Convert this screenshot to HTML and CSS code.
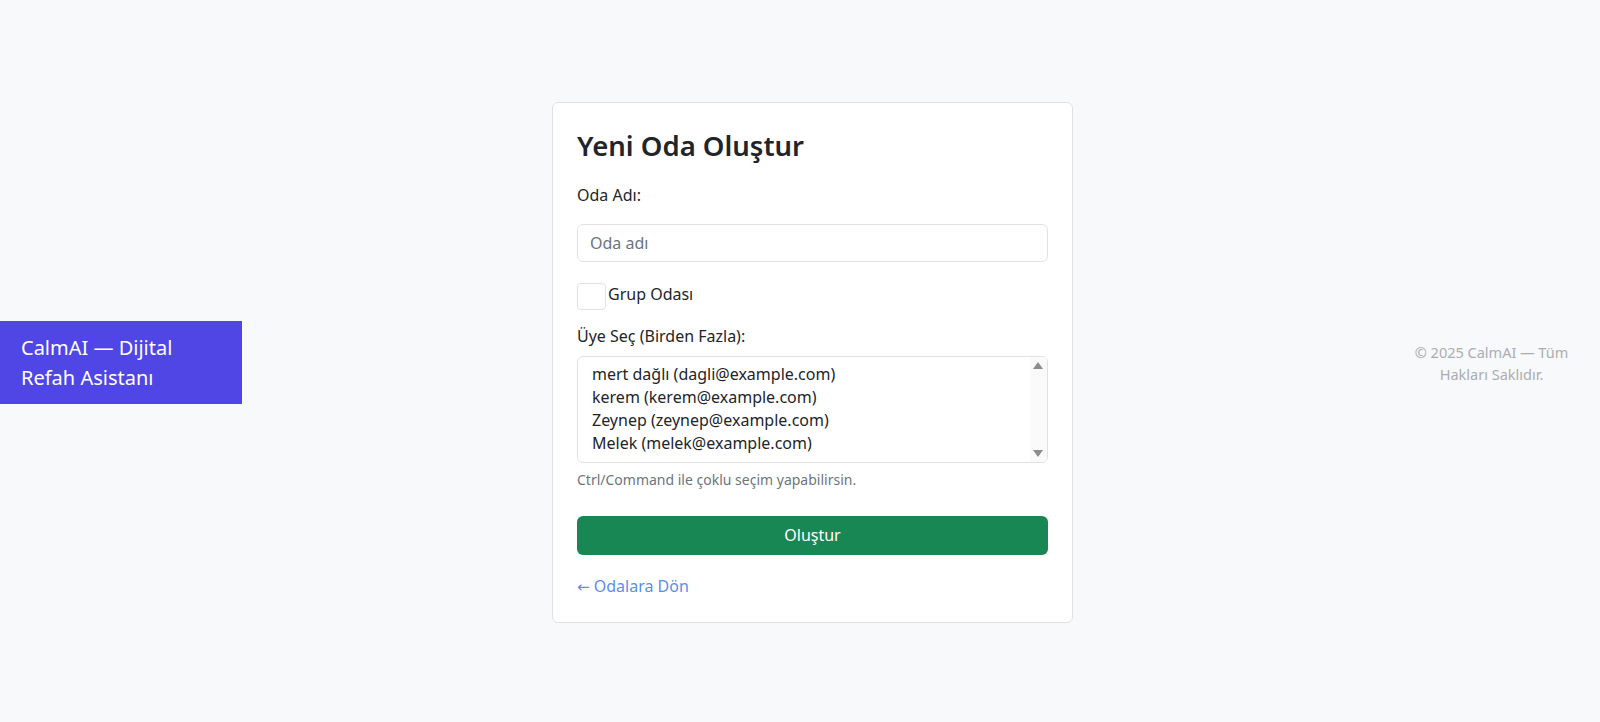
FILE: index.html
```html
<!DOCTYPE html>
<html lang="tr">
<head>
<meta charset="utf-8">
<title>Yeni Oda Oluştur</title>
<link rel="stylesheet" href="styles.css">
</head>
<body>
<header class="brand">CalmAI — Dijital Refah Asistanı</header>
<main class="main">
  <section class="card">
    <h2 class="title">Yeni Oda Oluştur</h2>
    <form class="form">
      <label class="label" for="name">Oda Adı:</label>
      <input class="control input" id="name" type="text" placeholder="Oda adı">
      <label class="check-row">
        <input class="check" type="checkbox">
        <span>Grup Odası</span>
      </label>
      <label class="label label-members" for="members">Üye Seç (Birden Fazla):</label>
      <div class="select-wrap">
        <select class="control select" id="members" multiple size="4">
          <option>mert dağlı (dagli@example.com)</option>
          <option>kerem (kerem@example.com)</option>
          <option>Zeynep (zeynep@example.com)</option>
          <option>Melek (melek@example.com)</option>
        </select>
        <div class="scrollbar" aria-hidden="true">
          <span class="sb-arrow sb-up"></span>
          <span class="sb-arrow sb-down"></span>
        </div>
      </div>
      <div class="hint">Ctrl/Command ile çoklu seçim yapabilirsin.</div>
      <button class="btn" type="button">Oluştur</button>
    </form>
    <a class="back" href="#"><span class="arrow">←</span> Odalara Dön</a>
  </section>
</main>
<footer class="foot">© 2025 CalmAI — Tüm Hakları Saklıdır.</footer>
</body>
</html>
```

FILE: styles.css
```css
* { box-sizing: border-box; }
html, body { height: 100%; }
body {
  margin: 0;
  min-height: 100vh;
  padding-top: 3px;
  display: flex;
  align-items: center;
  background: #f8f9fa;
  font-family: "Noto Sans", "Open Sans", sans-serif;
  font-size: 16px;
  line-height: 1.5;
  color: #212529;
}
.brand {
  width: 242px;
  flex: none;
  padding: 12px 21px 11px;
  background: #4f46e5;
  color: #fff;
  font-size: 20px;
  line-height: 30px;
}
.main {
  flex: 1;
  display: flex;
  justify-content: center;
}
.card {
  width: 521px;
  background: #fff;
  border: 1px solid #dee2e6;
  border-radius: 6px;
  padding: 24px;
}
.title {
  margin: 0 0 21px;
  font-size: 27.5px;
  line-height: 1.2;
  font-weight: 600;
  padding-top: 2px;
}
.form { display: flex; flex-direction: column; }
.label { display: block; margin-bottom: 17px; }
.label-members { margin-bottom: 8px; }
.control {
  display: block;
  width: 100%;
  border: 1px solid #dee2e6;
  border-radius: 6px;
  padding: 6px 12px;
  font: inherit;
  color: #212529;
  background: #fff;
}
.input { height: 38px; }
.input::placeholder { color: #6c757d; }
.check-row {
  display: flex;
  align-items: flex-start;
  margin-top: 20px;
  margin-bottom: 14px;
}
.check {
  appearance: none;
  -webkit-appearance: none;
  width: 29px;
  height: 27px;
  margin: 1px 2px 0 0;
  border: 1px solid #dee2e6;
  border-radius: 4px;
  background: #fff;
}
.select-wrap { position: relative; }
.select {
  height: 107px;
  overflow-y: hidden;
  padding-right: 28px;
}
.scrollbar {
  position: absolute;
  top: 1px;
  bottom: 1px;
  right: 1px;
  width: 17px;
  background: #fafafa;
  border-radius: 0 5px 5px 0;
}
.sb-arrow {
  position: absolute;
  left: 3px;
  width: 0;
  height: 0;
  border-left: 5.5px solid transparent;
  border-right: 5.5px solid transparent;
}
.sb-up {
  top: 5px;
  border-bottom: 7px solid #8c8c8c;
}
.sb-down {
  bottom: 5px;
  border-top: 7px solid #8c8c8c;
}
.hint {
  margin-top: 6px;
  font-size: 14px;
  color: #6c757d;
}
.btn {
  margin-top: 26px;
  height: 39px;
  border: none;
  border-radius: 6px;
  background: #198754;
  color: #fff;
  font: inherit;
}
.back {
  display: inline-block;
  margin-top: 19px;
  color: #5b8ee6;
  text-decoration: none;
}
.arrow {
  font-family: "DejaVu Sans", sans-serif;
  font-size: 15px;
}
.foot {
  width: 217px;
  flex: none;
  padding: 0 18px;
  text-align: center;
  font-size: 14.5px;
  line-height: 22px;
  color: #a9aeb3;
}
```
